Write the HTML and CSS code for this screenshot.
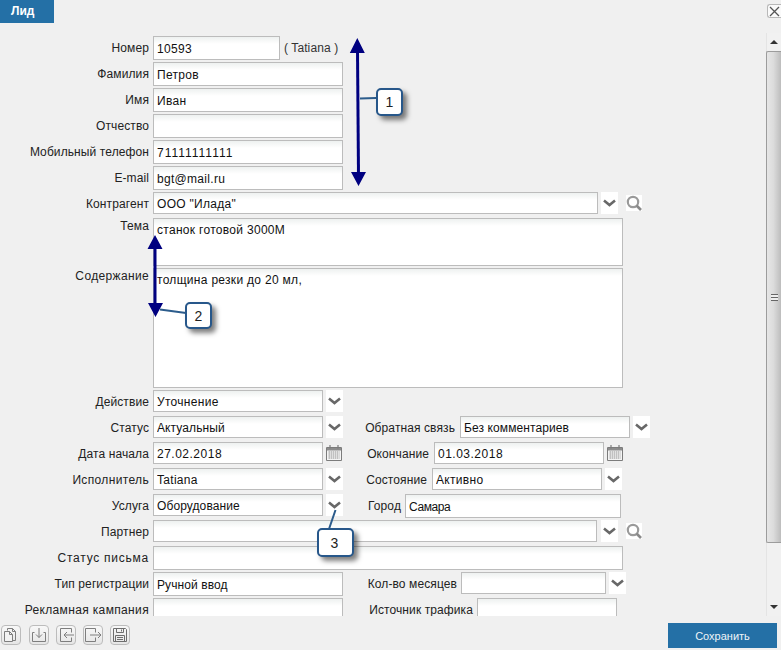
FILE: index.html
```html
<!DOCTYPE html>
<html lang="ru">
<head>
    <meta charset="UTF-8">
    <meta name="viewport" content="width=device-width, initial-scale=1.0">
    <title>Лид</title>
    <link rel="stylesheet" href="styles.css">
</head>
<body>
    <svg class="sprite">
        <symbol id="chevron" viewBox="0 0 17 22">
            <path d="M3 8.500l5.500 4.500 5.500-4.500" fill="none" stroke="#686868" stroke-width="2.600"/>
        </symbol>
        <symbol id="search" viewBox="0 0 16 16">
            <circle cx="7" cy="7" r="5.200" fill="none" stroke="#9a9a9a" stroke-width="2.200"/>
            <path d="M10.500 10.500l4.500 4.500" stroke="#8a8a8a" stroke-width="2.600"/>
        </symbol>
        <symbol id="calendar" viewBox="0 0 16 16">
            <path d="M.5 2.500h15v13H.5z" fill="#f4f4f4" stroke="#7c7c7c"/>
            <path d="M1 3h14v2.500H1z" fill="#8c8c8c"/>
            <path d="M4 0v3.500M12 0v3.500" stroke="#7c7c7c" stroke-width="1.200"/>
            <path d="M2.500 7h11M2.500 9h11M2.500 11h11M2.500 13h11" stroke="#8e8e8e" stroke-dasharray="1.500 .6"/>
        </symbol>
    </svg>

    <div class="header">
        <div class="tab">Лид</div>
        <div class="close">
            <svg width="11" height="11" viewBox="0 0 11 11"><path d="M1 1l9 9M10 1l-9 9" stroke="#555" stroke-width="1.300"/></svg>
        </div>
    </div>

    <div class="main">
        <form class="form">
            <div class="row">
                <label class="label">Номер</label>
                <input class="field w127 h24" value="10593">
                <span class="owner">( Tatiana )</span>
            </div>
            <div class="row">
                <label class="label">Фамилия</label>
                <input class="field w190 h24" value="Петров">
            </div>
            <div class="row">
                <label class="label">Имя</label>
                <input class="field w190 h24" value="Иван">
            </div>
            <div class="row">
                <label class="label">Отчество</label>
                <input class="field w190 h24" value="">
            </div>
            <div class="row">
                <label class="label">Мобильный телефон</label>
                <input class="field w190 h24 digits" value="71111111111">
            </div>
            <div class="row">
                <label class="label">E-mail</label>
                <input class="field w190 h24" value="bgt@mail.ru">
            </div>
            <div class="row">
                <label class="label">Контрагент</label>
                <input class="field w445" value='ООО "Илада"'>
                <span class="btn"><svg width="17" height="22"><use href="#chevron"/></svg></span>
                <span class="find"><svg width="16" height="16"><use href="#search"/></svg></span>
            </div>
            <div class="row">
                <label class="label label-top">Тема</label>
                <textarea class="field w470 area-subject">станок готовой 3000М</textarea>
            </div>
            <div class="row">
                <label class="label label-top spaced">Содержание</label>
                <textarea class="field w470 area-content">толщина резки до 20 мл,</textarea>
            </div>
            <div class="row">
                <label class="label">Действие</label>
                <input class="field w170" value="Уточнение">
                <span class="btn"><svg width="17" height="22"><use href="#chevron"/></svg></span>
            </div>
            <div class="row">
                <label class="label">Статус</label>
                <input class="field w170 tight" value="Актуальный">
                <span class="btn"><svg width="17" height="22"><use href="#chevron"/></svg></span>
                <label class="label side l112">Обратная связь</label>
                <input class="field w170 tight" value="Без комментариев">
                <span class="btn"><svg width="17" height="22"><use href="#chevron"/></svg></span>
            </div>
            <div class="row">
                <label class="label">Дата начала</label>
                <input class="field w170 dates" value="27.02.2018">
                <span class="cal"><svg width="16" height="16"><use href="#calendar"/></svg></span>
                <label class="label side l86">Окончание</label>
                <input class="field w170 dates" value="01.03.2018">
                <span class="cal"><svg width="16" height="16"><use href="#calendar"/></svg></span>
            </div>
            <div class="row">
                <label class="label spaced">Исполнитель</label>
                <input class="field w170" value="Tatiana">
                <span class="btn"><svg width="17" height="22"><use href="#chevron"/></svg></span>
                <label class="label side l84">Состояние</label>
                <input class="field w170" value="Активно">
                <span class="btn"><svg width="17" height="22"><use href="#chevron"/></svg></span>
            </div>
            <div class="row">
                <label class="label">Услуга</label>
                <input class="field w170 tight" value="Оборудование">
                <span class="btn"><svg width="17" height="22"><use href="#chevron"/></svg></span>
                <label class="label side l58 near">Город</label>
                <input class="field w216 h24 flat" value="Самара">
            </div>
            <div class="row">
                <label class="label">Партнер</label>
                <input class="field w444" value="">
                <span class="btn btn-wide"><svg width="17" height="22"><use href="#chevron"/></svg></span>
                <span class="find"><svg width="16" height="16"><use href="#search"/></svg></span>
            </div>
            <div class="row">
                <label class="label wider">Статус письма</label>
                <input class="field w470 h24" value="">
            </div>
            <div class="row">
                <label class="label">Тип регистрации</label>
                <input class="field w190 h24 tight" value="Ручной ввод">
                <label class="label side l114 near">Кол-во месяцев</label>
                <input class="field w145" value="">
                <span class="btn"><svg width="17" height="22"><use href="#chevron"/></svg></span>
            </div>
            <div class="row">
                <label class="label spaced">Рекламная кампания</label>
                <input class="field w190 h24" value="">
                <label class="label side l130 near">Источник трафика</label>
                <input class="field w140 h24" value="">
            </div>
        </form>

        <div class="scrollbar">
            <div class="scroll-btn"><span class="arrow-up"></span></div>
            <div class="thumb"><span class="grip"></span></div>
            <div class="scroll-track"></div>
            <div class="scroll-btn"><span class="arrow-down"></span></div>
        </div>
    </div>

    <div class="footer">
        <div class="tools">
            <span class="tool">
                <svg width="20" height="20" viewBox="0 0 20 20" fill="none" stroke="#7e7e7e"><path d="M6.500 5.500v-2h5l3 3v9h-3"/><path d="M11.500 3.500v3h3"/><path d="M3.500 6.500h5l3 3v7h-8z" fill="#f2f2f2"/><path d="M8.500 6.500v3h3"/></svg>
            </span>
            <span class="tool">
                <svg width="20" height="20" viewBox="0 0 20 20" fill="none" stroke="#7e7e7e"><path d="M5.500 7.500h-2v9h13v-9h-2"/><path d="M10 3v9.500M7 9.500l3 3 3-3"/></svg>
            </span>
            <span class="tool">
                <svg width="20" height="20" viewBox="0 0 20 20" fill="none" stroke="#7e7e7e"><path d="M15.500 7.500v-4h-11v13h11v-4"/><path d="M18 10H8M11 7l-3 3 3 3"/></svg>
            </span>
            <span class="tool">
                <svg width="20" height="20" viewBox="0 0 20 20" fill="none" stroke="#7e7e7e"><path d="M12.500 7.500v-4h-10v13h10v-4"/><path d="M7 10h11M15 7l3 3-3 3"/></svg>
            </span>
            <span class="tool">
                <svg width="20" height="20" viewBox="0 0 20 20" fill="none" stroke="#6e6e6e"><path d="M3.500 3.500h12l1 1v12h-13z"/><path d="M6.500 3.500v4h7v-4M11.500 4.500v2"/><path d="M5.500 16.500v-6h9v6M7 12.500h6M7 14.500h6"/></svg>
            </span>
        </div>
        <button class="save" type="button">Сохранить</button>
    </div>

    <!-- annotations drawn over the form -->
    <svg class="marks" width="781" height="650" viewBox="0 0 781 650">
        <path d="M357.500 50L358.500 176" stroke="#000080" stroke-width="3"/>
        <path d="M357.300 38l7.500 15h-15zM358.500 186l-7.500-14h15z" fill="#000080"/>
        <path d="M155 246v60" stroke="#000080" stroke-width="3"/>
        <path d="M155 235l7.500 14h-15zM155.500 317l-7.500-14h15z" fill="#000080"/>
        <path d="M360 98.500L376 98M160 309.500L186 313M335.500 510L329 529" stroke="#2c5c8c" stroke-width="2" fill="none"/>
    </svg>
    <div class="callout callout-1">1</div>
    <div class="callout callout-2">2</div>
    <div class="callout callout-3">3</div>
</body>
</html>
```

FILE: styles.css
```css
* {
    margin: 0;
    padding: 0;
    box-sizing: border-box;
    font-family: 'Liberation Sans', Arial, sans-serif;
}

html, body {
    height: 650px;
    overflow: hidden;
}

body {
    position: relative;
    display: flex;
    flex-direction: column;
    background: #f0f0f0;
    color: #222;
    font-size: 12px;
}

.sprite {
    display: none;
}

/* header */
.header {
    display: flex;
    justify-content: space-between;
    align-items: flex-start;
    height: 23px;
    flex: none;
}

.tab {
    width: 54px;
    height: 23px;
    padding-left: 11px;
    background: #2470a6;
    color: #fff;
    font-weight: bold;
    font-size: 12px;
    line-height: 23px;
}

.close {
    display: flex;
    align-items: center;
    justify-content: center;
    width: 14px;
    height: 14px;
    margin-top: 4px;
    background: #fafafa;
    border: 1px solid #b8b8b8;
    border-right: 0;
    border-radius: 3px 0 0 3px;
}

/* form */
.main {
    display: flex;
    height: 593px;
    flex: none;
}

.form {
    flex: 1;
    padding-top: 13px;
    overflow: hidden;
}

.row {
    display: flex;
    align-items: flex-start;
    min-height: 26px;
}

.label {
    flex: none;
    width: 149px;
    margin-right: 4px;
    text-align: right;
    line-height: 24px;
    letter-spacing: 0.1px;
    white-space: nowrap;
}

.label-top {
    line-height: 16px;
}

.spaced {
    letter-spacing: 0.35px;
}

.wider {
    letter-spacing: 0.75px;
}

.side {
    margin-right: 5px;
}

.near {
    margin-right: 4px;
}

.l58 { width: 58px; }
.l84 { width: 84px; }
.l86 { width: 86px; }
.l112 { width: 112px; }
.l114 { width: 114px; }
.l130 { width: 130px; }

.field {
    display: block;
    flex: none;
    height: 22px;
    padding: 2px 3px 0;
    border: 1px solid #bcbcbc;
    border-radius: 0;
    outline: none;
    background: linear-gradient(#eef1f0, #fff 7px);
    color: #111;
    font-size: 12px;
    letter-spacing: 0.3px;
}

.tight { letter-spacing: 0.1px; }
.flat { letter-spacing: -0.4px; }
.dates { letter-spacing: 0.5px; }
.digits { letter-spacing: 1px; }

textarea.field {
    padding-top: 3px;
    line-height: 16px;
    resize: none;
    overflow: hidden;
    margin-bottom: 2px;
}

.h24 { height: 24px; }

.w127 { width: 127px; }
.w140 { width: 140px; }
.w145 { width: 145px; }
.w170 { width: 170px; }
.w190 { width: 190px; }
.w216 { width: 216px; }
.w444 { width: 444px; }
.w445 { width: 445px; }
.w470 { width: 470px; }

.area-subject { height: 48px; }
.area-content { height: 120px; }

.owner {
    margin-left: 4px;
    line-height: 24px;
    color: #333;
    letter-spacing: 0.1px;
}

.btn {
    flex: none;
    width: 17px;
    height: 22px;
    margin-left: 3px;
    background: #fff;
}

.btn-wide {
    margin-left: 4px;
}

.btn svg, .find svg, .cal svg {
    display: block;
}

.find {
    flex: none;
    width: 16px;
    height: 16px;
    margin: 3px 0 0 8px;
    background: #fff;
}

.cal {
    flex: none;
    width: 17px;
    height: 16px;
    margin: 3px 0 0 3px;
}

/* scrollbar */
.scrollbar {
    display: flex;
    flex-direction: column;
    flex: none;
    width: 15px;
    margin-top: 10px;
    background: #f1f1f1;
    border-left: 1px solid #e4e4e4;
}

.scroll-btn {
    display: flex;
    align-items: center;
    justify-content: center;
    flex: none;
    height: 18px;
}

.arrow-up {
    border: 4px solid transparent;
    border-top: 0;
    border-bottom: 4px solid #333;
}

.arrow-down {
    border: 4px solid transparent;
    border-bottom: 0;
    border-top: 4px solid #333;
}

.thumb {
    display: flex;
    align-items: center;
    justify-content: center;
    flex: none;
    height: 492px;
    margin-left: -1px;
    border: 1px solid #9c9c9c;
    border-right: 0;
    border-radius: 2px 0 0 2px;
    background: linear-gradient(90deg, #e6e6e6, #dcdcdc 45%, #bdbdbd);
}

.grip {
    width: 7px;
    height: 7px;
    background: repeating-linear-gradient(#666 0, #666 1px, #eee 1px, #eee 3px);
}

.scroll-track {
    flex: 1;
}

/* footer */
.footer {
    position: relative;
    display: flex;
    justify-content: space-between;
    flex: 1;
    padding: 7px 4px 0 0;
}

.tools {
    display: flex;
    gap: 8px;
    padding: 2px 0 0 1px;
}

.tool {
    width: 20px;
    height: 20px;
    margin-right: -1px;
    border: 1px solid #bcbcbc;
    border-radius: 4px;
    background: linear-gradient(#f8f8f8, #e6e6e6);
}

.tool svg {
    display: block;
    margin: -1px;
}

.tool:first-child {
    margin-right: 0;
}

.save {
    width: 109px;
    height: 25px;
    border: 0;
    background: #2470a6;
    color: #eef4f8;
    font-size: 11px;
}

/* annotations */
.marks {
    position: absolute;
    left: 0;
    top: 0;
    pointer-events: none;
}

.callout {
    position: absolute;
    display: flex;
    align-items: center;
    justify-content: center;
    background: #fff;
    border: 2px solid #27578a;
    border-radius: 5px;
    box-shadow: 4px 4px 5px rgba(0, 0, 0, 0.5);
    color: #222;
    font-size: 14px;
}

.callout-1 {
    left: 376px;
    top: 88px;
    width: 27px;
    height: 28px;
}

.callout-2 {
    left: 185px;
    top: 302px;
    width: 27px;
    height: 27px;
}

.callout-3 {
    left: 317px;
    top: 528px;
    width: 37px;
    height: 29px;
    padding-right: 2px;
}
```
